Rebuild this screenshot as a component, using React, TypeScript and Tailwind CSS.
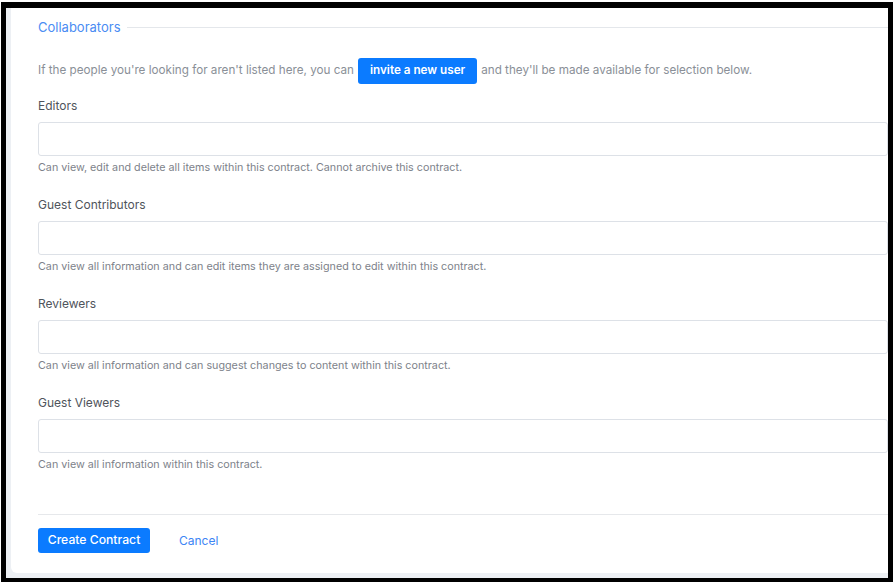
const FIELDS = [
  { label: 'Editors', help: 'Can view, edit and delete all items within this contract. Cannot archive this contract.' },
  { label: 'Guest Contributors', help: 'Can view all information and can edit items they are assigned to edit within this contract.' },
  { label: 'Reviewers', help: 'Can view all information and can suggest changes to content within this contract.' },
  { label: 'Guest Viewers', help: 'Can view all information within this contract.' },
]

function Field({ label, help, first }: { label: string; help: string; first?: boolean }) {
  return (
    <div className={first ? 'mt-[14px]' : 'mt-[22px]'}>
      <div className="text-[12px] leading-[16px] text-[#4f545b]">{label}</div>
      <div className="mt-[8px] h-[34px] rounded-[3px] border border-[#dde1e7] bg-white" />
      <div className="mt-[5px] text-[10.75px] leading-[14px] text-[#7d828a]">{help}</div>
    </div>
  )
}

export default function App() {
  return (
    <div className="h-[585px] w-[896px] bg-white pl-[1px] pr-[3px] pt-[2px] pb-[3px]" style={{ fontFamily: 'Inter, "Liberation Sans", sans-serif' }}>
      <div className="flex h-full overflow-hidden border-x-[5px] border-t-[6px] border-b-[4px] border-black bg-[#edf0f4] pl-[5px] pb-[5px]">
        <div className="-mr-[40px] flex-1 rounded-bl-md bg-white pl-[27px] pr-[40px] pt-[10px] pb-[19px]">
          <div className="flex items-center">
            <span className="text-[13px] leading-[18px] text-[#4a8cf3]">Collaborators</span>
            <div className="ml-[6px] h-px flex-1 bg-[#e4e7eb]" />
          </div>

          <div className="mt-[22px] flex items-center text-[11.7px] text-[#8a8f97]">
            <span>If the people you're looking for aren't listed here, you can</span>
            <button className="mx-[4px] h-[26px] rounded-[3px] bg-[#0b7bff] px-[12px] text-[11.7px] font-semibold text-white">
              invite a new user
            </button>
            <span>and they'll be made available for selection below.</span>
          </div>

          {FIELDS.map((f, i) => (
            <Field key={f.label} label={f.label} help={f.help} first={i === 0} />
          ))}

          <div className="mt-[42px] h-px bg-[#e6e8eb]" />

          <div className="mt-[13px] flex items-center">
            <button className="h-[25px] w-[112px] rounded-[3px] bg-[#0b7bff] text-[12.2px] font-medium text-white">
              Create Contract
            </button>
            <button className="ml-[29px] text-[12px] text-[#3d85f5]">Cancel</button>
          </div>
        </div>
      </div>
    </div>
  )
}
